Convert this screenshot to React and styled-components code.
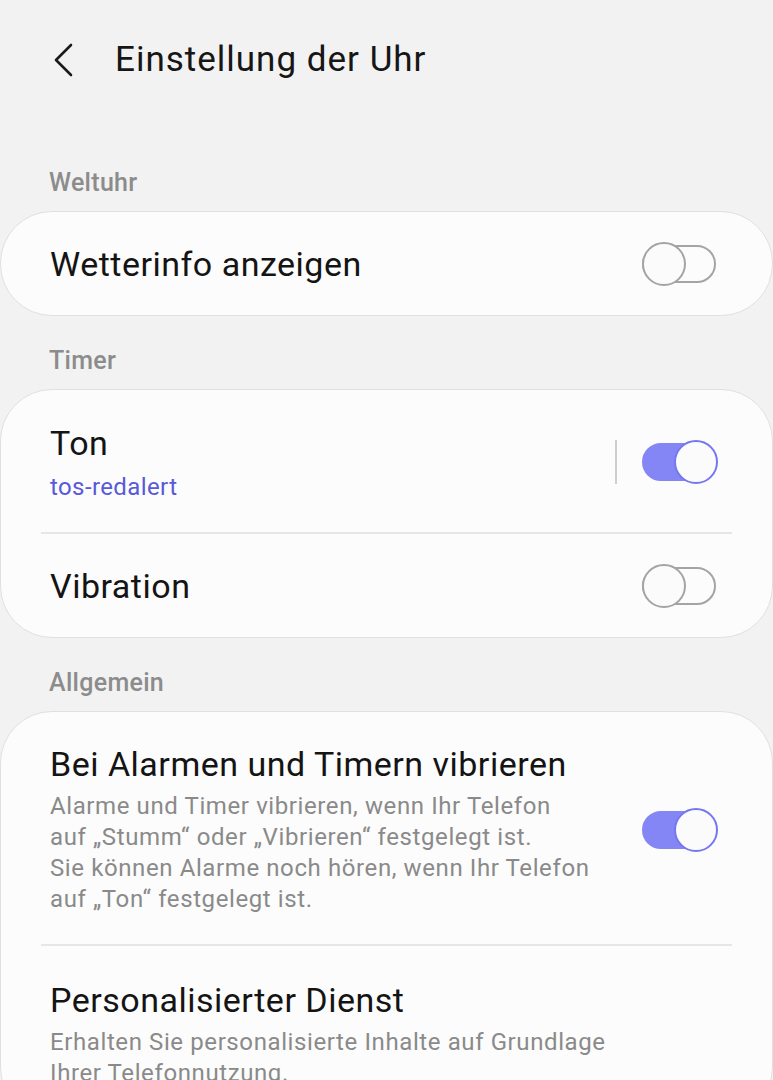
import React from "react";
import styled, { createGlobalStyle } from "styled-components";

const GlobalStyle = createGlobalStyle`
  body {
    margin: 0;
    background: #f2f2f2;
    font-family: Roboto, "Noto Sans", "Liberation Sans", sans-serif;
    color: #141414;
  }
`;

const Page = styled.div`
  width: 773px;
  min-height: 1080px;
  background: #f2f2f2;
  overflow: hidden;
`;

const Header = styled.header`
  height: 120px;
  display: flex;
  align-items: center;
  padding-left: 52px;
  gap: 39px;
`;

const BackButton = styled.button`
  border: 0;
  background: none;
  padding: 0;
  display: flex;
  width: 24px;
  height: 36px;
  cursor: pointer;
`;

const Title = styled.h1`
  margin: 0;
  font-size: 35px;
  font-weight: 400;
  letter-spacing: 1px;
  line-height: 40px;
  color: #161616;
`;

const SectionLabel = styled.div`
  padding: ${p => (p.first ? "48px" : "30px")} 49px 13px;
  font-size: 25px;
  font-weight: 500;
  letter-spacing: 0.3px;
  line-height: 30px;
  color: #8c8c8c;
`;

const Card = styled.section`
  background: #fcfcfc;
  border: 1px solid #e0e0e0;
  border-radius: 52px;
  overflow: hidden;
`;

const Row = styled.div`
  display: flex;
  align-items: center;
  min-height: ${p => p.height || 103}px;
  padding: ${p => p.pad || "0"} 56px ${p => p.padBottom || "0"} 49px;
  box-sizing: border-box;
`;

const TextBlock = styled.div`
  flex: 1;
  min-width: 0;
`;

const ItemTitle = styled.div`
  font-size: 34px;
  letter-spacing: 0.5px;
  line-height: 40px;
  color: #141414;
`;

const SubValue = styled.div`
  margin-top: 6px;
  font-size: 24px;
  letter-spacing: 0.4px;
  line-height: 36px;
  color: #5959d9;
`;

const Description = styled.div`
  margin-top: 7px;
  font-size: 24px;
  letter-spacing: 0.6px;
  line-height: 31px;
  color: #8a8a8a;
`;

const Separator = styled.hr`
  margin: 0 40px;
  border: 0;
  border-top: 2px solid #e6e6e6;
`;

const VDivider = styled.span`
  width: 2px;
  height: 44px;
  background: #cfcfcf;
  margin: 0 25px 4px 0;
`;

const Track = styled.span`
  position: relative;
  display: inline-block;
  width: 74px;
  height: 38px;
  box-sizing: border-box;
  border-radius: 19px;
  flex-shrink: 0;
  background: ${p => (p.on ? "#8486f6" : "transparent")};
  border: 2px solid ${p => (p.on ? "#8486f6" : "#a4a4a4")};
`;

const Knob = styled.span`
  position: absolute;
  top: 50%;
  left: ${p => (p.on ? "30px" : "-2px")};
  width: 44px;
  height: 44px;
  margin-top: -22px;
  box-sizing: border-box;
  border-radius: 50%;
  background: #fbfbfb;
  border: 2px solid ${p => (p.on ? "#7577ee" : "#a4a4a4")};
`;

const ToggleSlot = styled.span`
  display: flex;
  margin-bottom: ${p => p.lift || 0}px;
`;

const Toggle = ({ on, lift }) => (
  <ToggleSlot lift={lift}>
    <Track on={on ? 1 : 0}>
      <Knob on={on ? 1 : 0} />
    </Track>
  </ToggleSlot>
);

export default function App() {
  return (
    <Page>
      <GlobalStyle />
      <Header>
        <BackButton aria-label="Zurück">
          <svg width="24" height="36" viewBox="0 0 24 36">
            <polyline
              points="19,3 4,18 19,33"
              fill="none"
              stroke="#1a1a1a"
              strokeWidth="2.6"
              strokeLinecap="round"
              strokeLinejoin="round"
            />
          </svg>
        </BackButton>
        <Title>Einstellung der Uhr</Title>
      </Header>

      <SectionLabel first>Weltuhr</SectionLabel>
      <Card>
        <Row>
          <TextBlock>
            <ItemTitle>Wetterinfo anzeigen</ItemTitle>
          </TextBlock>
          <Toggle />
        </Row>
      </Card>

      <SectionLabel>Timer</SectionLabel>
      <Card>
        <Row height={141} pad="33px" padBottom="27px">
          <TextBlock>
            <ItemTitle>Ton</ItemTitle>
            <SubValue>tos-redalert</SubValue>
          </TextBlock>
          <VDivider />
          <Toggle on lift={4} />
        </Row>
        <Separator />
        <Row height={103}>
          <TextBlock>
            <ItemTitle>Vibration</ItemTitle>
          </TextBlock>
          <Toggle />
        </Row>
      </Card>

      <SectionLabel>Allgemein</SectionLabel>
      <Card>
        <Row pad="32px" padBottom="29px">
          <TextBlock>
            <ItemTitle>Bei Alarmen und Timern vibrieren</ItemTitle>
            <Description>
              Alarme und Timer vibrieren, wenn Ihr Telefon
              <br />
              auf „Stumm“ oder „Vibrieren“ festgelegt ist.
              <br />
              Sie können Alarme noch hören, wenn Ihr Telefon
              <br />
              auf „Ton“ festgelegt ist.
            </Description>
          </TextBlock>
          <Toggle on />
        </Row>
        <Separator />
        <Row pad="34px" padBottom="29px">
          <TextBlock>
            <ItemTitle>Personalisierter Dienst</ItemTitle>
            <Description>
              Erhalten Sie personalisierte Inhalte auf Grundlage
              <br />
              Ihrer Telefonnutzung.
            </Description>
          </TextBlock>
        </Row>
      </Card>
    </Page>
  );
}
